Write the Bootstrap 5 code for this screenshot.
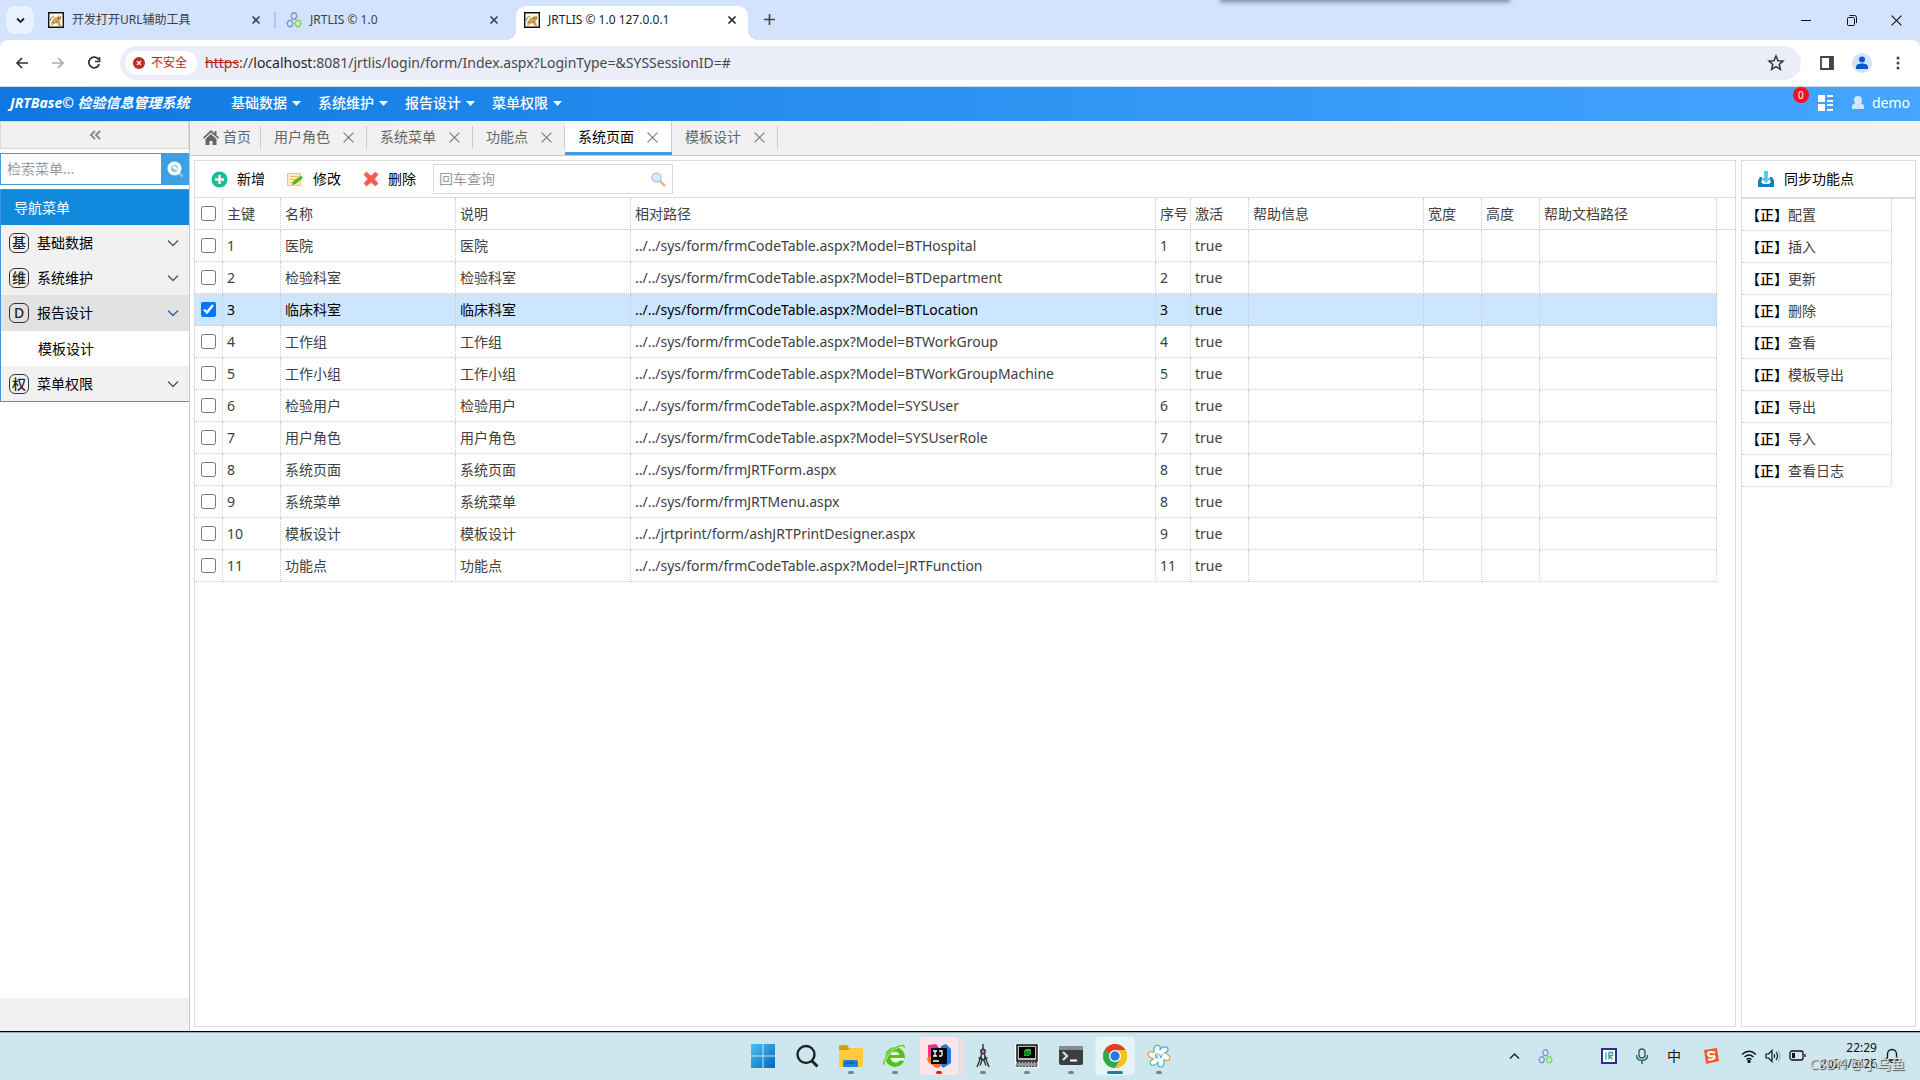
<!DOCTYPE html>
<html lang="zh-CN">
<head>
<meta charset="utf-8">
<meta name="viewport" content="width=device-width, initial-scale=1">
<title>JRTLIS © 1.0 127.0.0.1</title>
<link href="https://cdn.jsdelivr.net/npm/bootstrap@5.3.0/dist/css/bootstrap.min.css" rel="stylesheet">
<style>
  body { font-family: "Noto Sans", "Noto Sans CJK SC", sans-serif; font-size: 14px; line-height: 20px; color: #404040; background: #fff; height: 100vh; overflow: hidden; }
  svg { display: block; flex: none; }
  button { font: inherit; }
  a { color: inherit; text-decoration: none; }
  .bare { border: 0; background: none; padding: 0; color: inherit; display: flex; align-items: center; }

  /* browser tab strip */
  .strip { height: 40px; background: #d3e2fd; padding: 6px 12px 0 6px; color: #3c4043; font-size: 12px; }
  .strip-menu { width: 28px; height: 28px; border-radius: 9px; background: #e9f1fe; justify-content: center; margin-right: 4px; }
  .btab { width: 238px; height: 34px; padding: 0 15px 6px 10px; position: relative; }
  .btab.divided::after { content: ""; position: absolute; right: 0; top: 6px; width: 2px; height: 16px; background: #a8c7fa; }
  .btab.current { width: 232px; background: #fff; border-radius: 10px 10px 0 0; color: #1f1f1f; margin-left: 2px; padding: 0 11px 6px 8px; }
  .btab.current::before, .btab.current::after { content: ""; position: absolute; bottom: 0; width: 10px; height: 10px; }
  .btab.current::before { left: -10px; background: radial-gradient(circle at 0 0, transparent 10px, #fff 10px); }
  .btab.current::after { right: -10px; background: radial-gradient(circle at 100% 0, transparent 10px, #fff 10px); }
  .top-shade { position: absolute; top: -6px; left: 1222px; width: 286px; height: 6px; background: #fff; box-shadow: 0 0 5px 2px #77839b; }
  .win-btns { gap: 30px; padding-bottom: 6px; margin-right: 6px; color: #111; }

  /* address row */
  .addr-wrap { background: #d3e2fd; }
  .addr { height: 46px; background: #fff; border-radius: 8px 8px 0 0; padding: 0 14px; color: #474747; }
  .nav-btns { gap: 20px; margin-right: 18px; }
  .omni { height: 34px; background: #ebeef8; border-radius: 17px; padding: 0 12px 0 5px; }
  .unsafe { height: 24px; border-radius: 12px; background: #fff; color: #b3261e; font-size: 12px; padding: 0 10px 0 8px; gap: 6px; }
  .url-text { font-size: 14px; margin-left: 8px; color: #474747; }
  .url-text s { color: #b3261e; }
  .url-text b { font-weight: 400; color: #1f1f1f; }
  .addr-tools { gap: 18px; margin-left: 19px; }

  /* application header */
  .app-head { height: 35px; border-top: 1px solid #d5dbe3; background: linear-gradient(90deg, #0d78df, #2f95f3 55%, #45a5ff); color: #fff; padding: 0 10px 2px; }
  .brand-name { font-size: 14px; font-weight: 700; font-style: italic; width: 221px; }
  .top-menu { gap: 17px; font-weight: 500; }
  .top-menu button { gap: 5px; }
  .head-right { gap: 18px; }
  .note-count { position: absolute; left: -25px; top: -8px; width: 16px; height: 16px; border-radius: 8px; background: #fb0f1c; font-size: 10px; line-height: 16px; text-align: center; }

  /* sidebar */
  .side { width: 190px; border-right: 1px solid #c8c8c8; background: #fff; }
  .side-fold { height: 28px; background: #f1f1f1; border: 1px solid #dadada; color: #8b8b8b; justify-content: center; padding: 0; }
  .side-find { height: 32px; border: 1px solid #409fe0; border-right: 0; margin: 4px 0; }
  .side-find input { min-width: 0; border: 0; outline: 0; padding: 0 6px; background: #fff; }
  .side-find button { width: 28px; flex: none; background: #409fe0; justify-content: center; }
  ::placeholder { color: #9b9b9b; opacity: 1; }
  .side-nav { border: solid #4095dc; border-width: 1px 0 1px 1px; }
  .side-title { height: 35px; background: #1089dd; color: #fff; padding: 0 13px; }
  .side-item { height: 35px; background: #f1f1f1; color: #000; padding: 0 10px 0 8px; width: 100%; }
  .side-item.open { height: 36px; background: #e2e2e2; }
  .side-item.open .chev { color: #2a62ad; }
  .chev { color: #555; }
  .side-child { height: 35px; padding: 0 37px; color: #000; }
  .glyph-box { width: 20px; height: 20px; border: 1px solid #333; border-radius: 6px; color: #222; font-size: 14px; line-height: 18px; text-align: center; margin-right: 8px; font-weight: 500; display: inline-block; overflow: hidden; }
  .side-foot { height: 33px; background: #f1f1f1; }

  /* page tabs */
  .ptabs { height: 35px; background: #f1f1f1; border-bottom: 1px solid #c8c8c8; color: #666; }
  .ptab { height: 34px; padding: 0 13px 2px; gap: 13px; position: relative; }
  .ptab::after { content: ""; position: absolute; right: 0; top: 5px; height: 23px; width: 1px; background: #ccc; }
  .ptab.home { padding: 0 10px 2px 13px; gap: 4px; }
  .ptab.current { background: #fff; color: #000; border-bottom: 3px solid #4a98e2; padding: 1px 14px 0 13px; }
  .ptab.current::after { top: 0; height: 31px; }
  .ptab svg { color: #777; }

  /* panels */
  .work { padding: 4px; gap: 5px; }
  .pane { border: 1px solid #dcdcdc; }
  .pane-side { width: 175px; }
  .tools { height: 37px; border-bottom: 1px solid #dcdcdc; padding: 0 16px; color: #000; }
  .act-row { gap: 22px; margin-right: 17px; }
  .tools .act { gap: 9px; }
  .find-box { width: 240px; height: 30px; border: 1px solid #d8d8d8; padding: 0 6px 0 5px; }
  .find-box input { border: 0; outline: 0; padding: 0; min-width: 0; }
  .grid { width: 100%; table-layout: fixed; border-collapse: separate; border-spacing: 0; }
  .grid th, .grid td { height: 32px; padding: 0 4px; border-right: 1px dotted #ccc; border-bottom: 1px dotted #ccc; font-weight: 400; white-space: nowrap; overflow: hidden; }
  .grid th { border-bottom: 1px solid #dcdcdc; }
  .grid th.spare { border-right: 0; }
  .grid td.spare { border: 0; background: #fff; }
  .grid tr.picked td:not(.spare) { background: #cce6ff; color: #000; }
  .grid input { width: 15px; height: 15px; margin: 0; display: block; accent-color: #0075ff; }
  .grid .pick { padding: 0 6px; }
  .funcs b { font-weight: 500; color: #000; }
  .tools.sync { height: 38px; border-bottom-width: 2px; }

  /* desktop taskbar */
  .taskbar { height: 49px; background: #cee7ee; border-top: 1px solid #000; display: grid; grid-template-columns: 1fr auto 1fr; color: #111; box-shadow: inset 0 1px #9aaeb4; position: relative; }
  .apps { gap: 6px; align-items: center; padding-left: 2px; }
  .app { width: 38px; height: 38px; border-radius: 4px; justify-content: center; position: relative; }
  .app.runs::after { content: ""; position: absolute; left: 16px; bottom: 1px; width: 6px; height: 3px; border-radius: 2px; background: #7a868a; }
  .app.alert-app { background: #fde4e6; box-shadow: 2px 0 #cee7ee, 5px 0 #fbdadd; }
  .app.alert-app::after { background: #c42b1c; }
  .app.front { background: #e6f3f8; box-shadow: 0 0 0 1px #dcecf1; }
  .app.front::after { left: 11px; width: 16px; background: #1e8297; }
  .tray { justify-content: flex-end; padding-right: 21px; }
  .tray-icons { gap: 18px; margin-right: 22px; }
  .tray-more { margin-right: 18px; }
  .tray-status { gap: 8px; margin-left: 22px; }
  .clock { font-size: 12px; line-height: 16px; text-align: right; margin-left: 6px; }
  .stamp { position: absolute; right: 15px; bottom: 6px; font-size: 14px; line-height: 20px; color: #ddd; text-shadow: 1px 1px 1px #555; }
</style>
</head>
<body class="d-flex flex-column">

<svg width="0" height="0" class="position-absolute" aria-hidden="true">
  <symbol id="x" viewBox="0 0 10 10"><path d="M.5.5l9 9M9.500.5l-9 9" stroke="currentColor" fill="none"/></symbol>
  <symbol id="xb" viewBox="0 0 10 10"><path d="M1.500 1.500l7 7M8.500 1.500l-7 7" stroke="currentColor" stroke-width="1.600" fill="none"/></symbol>
  <symbol id="caret" viewBox="0 0 9 5"><path d="M0 0h9L4.500 5z" fill="currentColor"/></symbol>
  <symbol id="down" viewBox="0 0 12 8"><path d="M1 1.500l5 5 5-5" stroke="currentColor" stroke-width="1.300" fill="none"/></symbol>
  <symbol id="cat" viewBox="0 0 16 16"><path fill="#fffdf4" stroke="#111" stroke-width="1.400" d="M.7.7h14.600v14.600H.7z"/><path fill="#d9a34c" d="M6 6l2-1 1 .5L10.500 3l1 1.500 2-1-.8 4-1 2 1.600 4.500h-2.500l-2-3-2.800 1-2 1.500H2.500L5 10.500 4 9z"/><path d="M2 9l1-3 3-2M3 11l3-1M9 6l2 1M8 9l2 2" stroke="#777" fill="none"/><path d="M10 6h1M12 6h1" stroke="#333"/></symbol>
  <symbol id="rings" viewBox="0 0 16 16"><g fill="none" stroke-width="1.300"><path d="M6.500 1h3l1.500 3-1.500 3h-3L5 4zM2.500 8.500h3l1.500 3-1.500 3h-3L1 11.500z" stroke="#7b93cf"/><path d="M10.500 8.500h3l1.500 3-1.500 3h-3L9 11.500z" stroke="#7bd93a"/></g></symbol>
</svg>

<div class="strip d-flex position-relative">
  <button class="bare strip-menu" aria-label="搜索标签页"><svg width="9" height="7"><path d="M1 1.500l3.500 3.500L8 1.500" stroke="#222" stroke-width="1.800" fill="none"/></svg></button>
  <div class="btab divided d-flex align-items-center gap-2"><svg width="16" height="16"><use href="#cat"/></svg><span class="flex-fill">开发打开URL辅助工具</span><button class="bare" aria-label="关闭"><svg width="10" height="10"><use href="#xb"/></svg></button></div>
  <div class="btab d-flex align-items-center gap-2"><svg width="16" height="16"><use href="#rings"/></svg><span class="flex-fill">JRTLIS © 1.0</span><button class="bare" aria-label="关闭"><svg width="10" height="10"><use href="#xb"/></svg></button></div>
  <div class="btab current d-flex align-items-center gap-2"><svg width="16" height="16"><use href="#cat"/></svg><span class="flex-fill">JRTLIS © 1.0 127.0.0.1</span><button class="bare" aria-label="关闭"><svg width="10" height="10"><use href="#xb"/></svg></button></div>
  <button class="bare ps-3 pb-2" aria-label="新标签页"><svg width="11" height="11"><path d="M5.500 0v11M0 5.500h11" stroke="#444" stroke-width="1.600"/></svg></button>
  <div class="top-shade"></div>
  <div class="win-btns d-flex ms-auto">
    <button class="bare" aria-label="最小化"><svg width="16" height="12"><path d="M2 6.500h10" stroke="currentColor"/></svg></button>
    <button class="bare" aria-label="还原"><svg width="16" height="12"><rect x="2.500" y="3.500" width="7" height="8" rx="1" fill="none" stroke="currentColor"/><path d="M4.500 1.500h5q2 0 2 2V9" fill="none" stroke="currentColor"/></svg></button>
    <button class="bare" aria-label="关闭窗口"><svg width="11" height="11"><use href="#x"/></svg></button>
  </div>
</div>

<div class="addr-wrap">
  <div class="addr d-flex align-items-center">
    <div class="nav-btns d-flex align-items-center">
      <button class="bare" aria-label="后退"><svg width="16" height="16" fill="none" stroke="#333" stroke-width="1.700"><path d="M14 8H3M8 3L3 8l5 5"/></svg></button>
      <button class="bare" aria-label="前进"><svg width="16" height="16" fill="none" stroke="#aaa" stroke-width="1.700"><path d="M2 8h11M8 3l5 5-5 5"/></svg></button>
      <button class="bare" aria-label="刷新"><svg width="16" height="16" fill="none" stroke="#333" stroke-width="1.700"><path d="M12.500 4.500A5.300 5.300 0 1 0 13.200 9M13.500 2v4.500H9"/></svg></button>
    </div>
    <div class="omni d-flex align-items-center flex-fill">
      <button class="bare unsafe"><svg width="12" height="12"><circle cx="6" cy="6" r="6" fill="#c5281c"/><path d="M4 4l4 4M8 4L4 8" stroke="#fff" stroke-width="1.300"/></svg>不安全</button>
      <div class="url-text flex-fill"><s>https</s>://<b>localhost</b>:8081/jrtlis/login/form/Index.aspx?LoginType=&amp;SYSSessionID=#</div>
      <button class="bare" aria-label="收藏"><svg width="24" height="18" viewBox="-3 0 24 18"><path d="M8 2l2 4.700 5 .4-3.800 3.300 1.200 5L8 12.700l-4.400 2.700 1.200-5L1 7.100l5-.4z" fill="none" stroke="#333" stroke-width="1.500"/></svg></button>
    </div>
    <div class="addr-tools d-flex align-items-center">
      <button class="bare" aria-label="侧边栏"><svg width="14" height="14"><path d="M1 1h12v12H1z" fill="none" stroke="#444" stroke-width="1.800"/><path d="M9 1h4v12H9z" fill="#444"/></svg></button>
      <button class="bare" aria-label="用户"><svg width="20" height="20"><circle cx="10" cy="10" r="10" fill="#d3e2fd"/><circle cx="10" cy="6.500" r="3" fill="#0b57d0"/><path d="M4 16v-2c0-2.500 3-3.500 6-3.500s6 1 6 3.500v2z" fill="#0b57d0"/></svg></button>
      <button class="bare" aria-label="菜单"><svg width="16" height="16" fill="#444"><circle cx="8" cy="3" r="1.500"/><circle cx="8" cy="8" r="1.500"/><circle cx="8" cy="13" r="1.500"/></svg></button>
    </div>
  </div>
</div>

<header class="app-head d-flex align-items-center">
  <div class="brand-name">JRTBase© 检验信息管理系统</div>
  <nav class="top-menu d-flex">
    <button class="bare">基础数据<svg width="9" height="5"><use href="#caret"/></svg></button>
    <button class="bare">系统维护<svg width="9" height="5"><use href="#caret"/></svg></button>
    <button class="bare">报告设计<svg width="9" height="5"><use href="#caret"/></svg></button>
    <button class="bare">菜单权限<svg width="9" height="5"><use href="#caret"/></svg></button>
  </nav>
  <div class="head-right d-flex align-items-center ms-auto">
    <button class="bare position-relative" aria-label="消息 0"><svg width="16" height="16" fill="#fff"><path d="M0 0h7v7H0zM0 9h7v7H0zM9 0h6v2H9zM9 5h6v2H9zM9 9h6v2H9zM9 14h6v2H9z"/></svg><span class="note-count">0</span></button>
    <a href="#" class="d-flex align-items-center gap-2"><svg width="12" height="14" fill="#cfe6ff"><circle cx="6" cy="4" r="4"/><path d="M0 11c0-3 2-4 6-4s6 1 6 4v2H0z"/></svg>demo</a>
  </div>
</header>

<div class="d-flex flex-fill" style="min-height:0">
  <aside class="side d-flex flex-column flex-shrink-0">
    <button class="bare side-fold" aria-label="折叠"><svg width="12" height="10" fill="none" stroke="currentColor" stroke-width="2"><path d="M6 1L2 5l4 4M11 1L7 5l4 4"/></svg></button>
    <div class="side-find d-flex"><input class="flex-fill" type="text" placeholder="检索菜单..." aria-label="检索菜单"><button class="bare" aria-label="检索"><svg width="17" height="17"><path d="M10.500 10.500l5 5" stroke="#5fd0ff" stroke-width="3"/><circle cx="7.500" cy="7.500" r="7" fill="#fff"/><circle cx="7.500" cy="7.500" r="3.500" fill="#7cccf5"/><path d="M6 5.500l4 3" stroke="#fff" stroke-width="2.500"/></svg></button></div>
    <nav class="side-nav">
      <div class="side-title d-flex align-items-center">导航菜单</div>
      <button class="bare side-item"><span class="glyph-box">基</span>基础数据<svg class="chev ms-auto" width="12" height="8"><use href="#down"/></svg></button>
      <button class="bare side-item"><span class="glyph-box">维</span>系统维护<svg class="chev ms-auto" width="12" height="8"><use href="#down"/></svg></button>
      <button class="bare side-item open"><span class="glyph-box">D</span>报告设计<svg class="chev ms-auto" width="12" height="8"><use href="#down"/></svg></button>
      <a href="#" class="side-child d-flex align-items-center">模板设计</a>
      <button class="bare side-item"><span class="glyph-box">权</span>菜单权限<svg class="chev ms-auto" width="12" height="8"><use href="#down"/></svg></button>
    </nav>
    <div class="side-foot mt-auto"></div>
  </aside>

  <main class="d-flex flex-column flex-fill" style="min-width:0">
    <div class="ptabs d-flex">
      <button class="bare ptab home"><svg width="16" height="15" fill="#666"><path d="M8 0L0 7.500l1 1.200L8 2.500l7 6.200 1-1.200-2.500-2.300V1h-2v2.200zM8 4L2.500 9v6H6.500v-4h3v4h4V9z"/></svg>首页</button>
      <button class="bare ptab">用户角色<svg width="11" height="11"><use href="#x"/></svg></button>
      <button class="bare ptab">系统菜单<svg width="11" height="11"><use href="#x"/></svg></button>
      <button class="bare ptab">功能点<svg width="11" height="11"><use href="#x"/></svg></button>
      <button class="bare ptab current">系统页面<svg width="11" height="11"><use href="#x"/></svg></button>
      <button class="bare ptab">模板设计<svg width="11" height="11"><use href="#x"/></svg></button>
    </div>

    <div class="work d-flex flex-fill">
      <section class="pane flex-fill" style="min-width:0">
        <div class="tools d-flex align-items-center">
          <div class="act-row d-flex">
            <button class="bare act"><svg width="17" height="17"><circle cx="8.500" cy="8.500" r="8" fill="#1abc9c"/><path d="M8.500 4v9M4 8.500h9" stroke="#fff5dc" stroke-width="2.400"/></svg>新增</button>
            <button class="bare act"><svg width="17" height="15"><path d="M.5 1.500h13v12H.5z" fill="#fdebc0" stroke="#f5c778"/><path d="M3 4.500h8M3 7.500h6M3 10.500h4" stroke="#f2b968"/><path d="M5 13l1-3.500 8-6L16 6l-7.500 6z" fill="#55b80f"/></svg>修改</button>
            <button class="bare act"><svg width="16" height="16"><path d="M3.500 1L8 5 12.500 1 15 3.500 11.500 8 15 12.500 12.500 15 8 11.300 3.500 15 1 12.500 4.700 8 1 3.500z" fill="#f25b50" stroke="#ff7b6e"/></svg>删除</button>
          </div>
          <div class="find-box d-flex align-items-center"><input class="flex-fill" type="text" placeholder="回车查询" aria-label="回车查询"><svg width="15" height="15"><path d="M9 9l5 5" stroke="#e9b878" stroke-width="2.500"/><circle cx="5.500" cy="5.500" r="4.500" fill="#d7ecfb" stroke="#b3cbe8" stroke-width="1.500"/></svg></div>
        </div>
        <table class="grid">
          <colgroup><col style="width:28px"><col style="width:58px"><col style="width:175px"><col style="width:175px"><col><col style="width:35px"><col style="width:58px"><col style="width:175px"><col style="width:58px"><col style="width:58px"><col style="width:177px"><col style="width:18px"></colgroup>
          <thead><tr><th class="pick"><input type="checkbox" aria-label="全选"></th><th>主键</th><th>名称</th><th>说明</th><th>相对路径</th><th>序号</th><th>激活</th><th>帮助信息</th><th>宽度</th><th>高度</th><th>帮助文档路径</th><th class="spare"></th></tr></thead>
          <tbody>
            <tr><td class="pick"><input type="checkbox" aria-label="1"></td><td>1</td><td>医院</td><td>医院</td><td>../../sys/form/frmCodeTable.aspx?Model=BTHospital</td><td>1</td><td>true</td><td></td><td></td><td></td><td></td><td class="spare"></td></tr>
            <tr><td class="pick"><input type="checkbox" aria-label="2"></td><td>2</td><td>检验科室</td><td>检验科室</td><td>../../sys/form/frmCodeTable.aspx?Model=BTDepartment</td><td>2</td><td>true</td><td></td><td></td><td></td><td></td><td class="spare"></td></tr>
            <tr class="picked"><td class="pick"><input type="checkbox" checked aria-label="3"></td><td>3</td><td>临床科室</td><td>临床科室</td><td>../../sys/form/frmCodeTable.aspx?Model=BTLocation</td><td>3</td><td>true</td><td></td><td></td><td></td><td></td><td class="spare"></td></tr>
            <tr><td class="pick"><input type="checkbox" aria-label="4"></td><td>4</td><td>工作组</td><td>工作组</td><td>../../sys/form/frmCodeTable.aspx?Model=BTWorkGroup</td><td>4</td><td>true</td><td></td><td></td><td></td><td></td><td class="spare"></td></tr>
            <tr><td class="pick"><input type="checkbox" aria-label="5"></td><td>5</td><td>工作小组</td><td>工作小组</td><td>../../sys/form/frmCodeTable.aspx?Model=BTWorkGroupMachine</td><td>5</td><td>true</td><td></td><td></td><td></td><td></td><td class="spare"></td></tr>
            <tr><td class="pick"><input type="checkbox" aria-label="6"></td><td>6</td><td>检验用户</td><td>检验用户</td><td>../../sys/form/frmCodeTable.aspx?Model=SYSUser</td><td>6</td><td>true</td><td></td><td></td><td></td><td></td><td class="spare"></td></tr>
            <tr><td class="pick"><input type="checkbox" aria-label="7"></td><td>7</td><td>用户角色</td><td>用户角色</td><td>../../sys/form/frmCodeTable.aspx?Model=SYSUserRole</td><td>7</td><td>true</td><td></td><td></td><td></td><td></td><td class="spare"></td></tr>
            <tr><td class="pick"><input type="checkbox" aria-label="8"></td><td>8</td><td>系统页面</td><td>系统页面</td><td>../../sys/form/frmJRTForm.aspx</td><td>8</td><td>true</td><td></td><td></td><td></td><td></td><td class="spare"></td></tr>
            <tr><td class="pick"><input type="checkbox" aria-label="9"></td><td>9</td><td>系统菜单</td><td>系统菜单</td><td>../../sys/form/frmJRTMenu.aspx</td><td>8</td><td>true</td><td></td><td></td><td></td><td></td><td class="spare"></td></tr>
            <tr><td class="pick"><input type="checkbox" aria-label="10"></td><td>10</td><td>模板设计</td><td>模板设计</td><td>../../jrtprint/form/ashJRTPrintDesigner.aspx</td><td>9</td><td>true</td><td></td><td></td><td></td><td></td><td class="spare"></td></tr>
            <tr><td class="pick"><input type="checkbox" aria-label="11"></td><td>11</td><td>功能点</td><td>功能点</td><td>../../sys/form/frmCodeTable.aspx?Model=JRTFunction</td><td>11</td><td>true</td><td></td><td></td><td></td><td></td><td class="spare"></td></tr>
          </tbody>
        </table>
      </section>

      <section class="pane pane-side flex-shrink-0">
        <div class="tools sync d-flex align-items-center">
          <button class="bare act"><svg width="17" height="17"><path d="M4 6H2L0 9.500V16h16V9.500L14 6h-2v3l1 2-2 2H5l-2-2 1-2z" fill="#1480b8"/><path d="M6 0h4v7h3l-5 5-5-5h3z" fill="#5cc8f8"/></svg>同步功能点</button>
        </div>
        <table class="grid funcs">
          <colgroup><col><col style="width:23px"></colgroup>
          <tbody>
            <tr><td><b>【正】</b>配置</td><td class="spare"></td></tr>
            <tr><td><b>【正】</b>插入</td><td class="spare"></td></tr>
            <tr><td><b>【正】</b>更新</td><td class="spare"></td></tr>
            <tr><td><b>【正】</b>删除</td><td class="spare"></td></tr>
            <tr><td><b>【正】</b>查看</td><td class="spare"></td></tr>
            <tr><td><b>【正】</b>模板导出</td><td class="spare"></td></tr>
            <tr><td><b>【正】</b>导出</td><td class="spare"></td></tr>
            <tr><td><b>【正】</b>导入</td><td class="spare"></td></tr>
            <tr><td><b>【正】</b>查看日志</td><td class="spare"></td></tr>
          </tbody>
        </table>
      </section>
    </div>
  </main>
</div>

<footer class="taskbar flex-shrink-0">
  <div></div>
  <div class="apps d-flex">
    <button class="bare app" aria-label="开始"><svg width="24" height="24"><defs><linearGradient id="wg" x1="0" y1="0" x2="1" y2="1"><stop offset="0" stop-color="#4cc2f5"/><stop offset="1" stop-color="#0067c0"/></linearGradient></defs><path d="M0 0h11.500v11.500H0zM12.500 0H24v11.500H12.500zM0 12.500h11.500V24H0zM12.500 12.500H24V24H12.500z" fill="url(#wg)"/></svg></button>
    <button class="bare app" aria-label="搜索"><svg width="24" height="24" fill="none" stroke="#222" stroke-width="2.400"><circle cx="11" cy="10.500" r="8.500"/><path d="M17 17l5.500 5.500" stroke-width="3"/></svg></button>
    <button class="bare app runs" aria-label="文件资源管理器"><svg width="24" height="22"><path d="M0 2q0-2 2-2h6l2 3h12q2 0 2 2v3H0z" fill="#dc9a0b"/><path d="M0 5h9l2-2h11q2 0 2 2v15q0 2-2 2H2q-2 0-2-2z" fill="#ffcb3d"/><path d="M4 22v-5q0-2 2-2h11q2 0 2 2v5z" fill="#1a83d8"/><path d="M7 18h9" stroke="#0c5ca5" stroke-width="1.500"/></svg></button>
    <button class="bare app runs" aria-label="浏览器"><svg width="24" height="24" viewBox="0 0 24 24"><circle cx="12" cy="13" r="10" fill="#55c021"/><path d="M7.500 11c1-4.500 8-4.500 9 0zM7.500 14h14v2.500h-5c-2.500 3.500-8 2.500-9-2.500z" fill="#f4fff0"/><path d="M2 20C-2 21 4 8 14 3c5-2.500 8-2 7 1" fill="none" stroke="#d8f7c0" stroke-width="2.600"/><path d="M2 20C-2 21 4 8 14 3c5-2.500 8-2 7 1" fill="none" stroke="#62c92c" stroke-width="1.400"/></svg></button>
    <button class="bare app runs alert-app" aria-label="IntelliJ IDEA"><svg width="26" height="26" viewBox="0 0 26 26"><path d="M2 2l8-1 6 8-8 9-6-2z" fill="#f7308c"/><path d="M15 3l5-2 5 5v14l-8 5-5-7z" fill="#157df4"/><path d="M1 15l9-5 5 14-5 1-8-6z" fill="#fb7136"/><path d="M9 2l5 4v8H6z" fill="#9b3cc8"/><path d="M5 5h16v16H5z" fill="#080808"/><path d="M7 8h4M9 8v5M7 13h4M13 8h3v4q0 1-1 1h-2M7 18h6" stroke="#fff" stroke-width="1.300" fill="none"/></svg></button>
    <button class="bare app runs" aria-label="设计工具"><svg width="14" height="24" viewBox="0 0 14 24" fill="none" stroke="#333" stroke-width="1.400"><path d="M7 0v6M6 9L3 18l-2 5M8 9l3 9 2 5M2.500 13.500q4.500 4 9 0M5 12.500l1 4-2 5M9 12.500l-1 4 2 5"/><circle cx="7" cy="7.500" r="2.200" fill="#999"/></svg></button>
    <button class="bare app runs" aria-label="终端服务"><svg width="24" height="24"><path d="M0 0h24v24H0z" fill="#fff"/><path d="M2 1h20v16H2z" fill="#bbb" stroke="#111" stroke-width="1.500"/><path d="M4 3h16v11H4z" fill="#000"/><path d="M9 7l2-2h5v5l-2 2H9z" fill="#1bd21b"/><path d="M9 8h5v4M11 8v4M14 8l2-2M9 10h5" stroke="#043" stroke-width=".8" fill="none"/><path d="M2 18.500h20v4H1z" fill="#999" stroke="#444" stroke-dasharray="2 1"/></svg></button>
    <button class="bare app runs" aria-label="命令行"><svg width="24" height="20"><rect width="24" height="19" rx="2" fill="#3a3f42"/><path d="M0 4V2q0-2 2-2h20q2 0 2 2v2z" fill="#858c90"/><path d="M4 6l4 4-4 4" stroke="#ddd" stroke-width="2.200" fill="none"/><path d="M11 14.500h7" stroke="#fff" stroke-width="2"/></svg></button>
    <button class="bare app runs front" aria-label="Chrome"><svg width="24" height="24" viewBox="0 0 24 24"><circle cx="12" cy="12" r="12" fill="#fbc116"/><path d="M12 12L1.600 6A12 12 0 0 1 22.400 6z" fill="#e33b2e"/><path d="M12 12L1.600 6A12 12 0 0 0 12 24l5.500-9z" fill="#2da94f"/><path d="M12 6h10.400A12 12 0 0 1 12 24l5-9z" fill="#fbc116"/><circle cx="12" cy="12" r="6" fill="#fff"/><circle cx="12" cy="12" r="4.700" fill="#2878eb"/></svg></button>
    <button class="bare app runs" aria-label="录屏"><svg width="24" height="24" viewBox="0 0 24 24" fill="none" stroke-width="1.200"><g fill="#fff"><ellipse cx="10" cy="5" rx="3" ry="4" transform="rotate(20 10 5)" stroke="#37b6a5"/><ellipse cx="17" cy="6" rx="3" ry="4" transform="rotate(70 17 6)" stroke="#42a7de"/><ellipse cx="19" cy="13" rx="3" ry="4" transform="rotate(130 19 13)" stroke="#ec9454"/><ellipse cx="14" cy="19" rx="3" ry="4" transform="rotate(10 14 19)" stroke="#4bb5d2"/><ellipse cx="7" cy="18" rx="3" ry="4" transform="rotate(60 7 18)" stroke="#53c087"/><ellipse cx="5" cy="11" rx="3" ry="4" transform="rotate(120 5 11)" stroke="#ec9454"/></g><circle cx="12" cy="12" r="6" fill="#fff"/><path d="M11.500 10h-3v4h3M8.500 12h3M12.500 10l1.500 4 1.500-4" stroke="#58a9d6" stroke-width="1"/></svg></button>
  </div>
  <div class="tray d-flex align-items-center">
    <svg width="11" height="8" class="tray-more"><path d="M1 6.500L5.500 2 10 6.500" fill="none" stroke="#222" stroke-width="1.500"/></svg>
    <svg width="15" height="15" class="me-5"><use href="#rings"/></svg>
    <div class="tray-icons d-flex align-items-center">
      <svg width="16" height="16"><path d="M1 1h14v14H1z" fill="#fff" stroke="#2d3092" stroke-width="2"/><path d="M5 4.500v7M8 11.500v-7h3.500v3H8l3.500 4" fill="none" stroke="#35aaa4" stroke-width="1.400"/></svg>
      <svg width="14" height="16" fill="none" stroke="#345d6b" stroke-width="1.400"><rect x="4" y="1" width="6" height="9" rx="3"/><path d="M1.500 7q0 5.500 5.500 5.500T12.500 7M7 12.500V16"/></svg>
      <span>中</span>
    </div>
    <svg width="16" height="16"><path d="M1 2l13-2 2 13-13 3z" fill="#f25c27"/><path d="M12 4.500Q5 3 5 6t6 2q2 4-6 3.500" fill="none" stroke="#fff" stroke-width="2.200"/></svg>
    <div class="tray-status d-flex align-items-center">
      <svg width="16" height="13" fill="none" stroke="#111" stroke-width="1.300"><path d="M1 4.500q7-6.500 14 0M3.500 7q4.500-4 9 0M5.500 9.500q2.500-2 5 0"/><circle cx="8" cy="11.500" r="1" fill="#111"/></svg>
      <svg width="16" height="14" fill="none" stroke="#111" stroke-width="1.200"><path d="M1 5h2.500L7 1.500v11L3.500 9H1zM9 5q1.500 2 0 4M11 3q3 4 0 8"/><path d="M13 1q4 6 0 12" stroke="#aaa"/></svg>
      <svg width="17" height="12" fill="none" stroke="#111" stroke-width="1.300"><rect x="1" y="1" width="13" height="9" rx="2"/><path d="M16 4v3"/><path d="M3 3h3v5H3z" fill="#111" stroke="none"/></svg>
      <div class="clock">22:29<br>2024/3/26</div>
      <svg width="14" height="16" fill="none" stroke="#111" stroke-width="1.300"><path d="M1 12h12l-1.500-3V6a4.500 4.500 0 0 0-9 0v3zM5 13q2 3 4 0"/></svg>
    </div>
  </div>
  <div class="stamp">CSDN @小乌鱼</div>
</footer>
<script src="https://cdn.jsdelivr.net/npm/bootstrap@5.3.0/dist/js/bootstrap.bundle.min.js"></script>
</body>
</html>
